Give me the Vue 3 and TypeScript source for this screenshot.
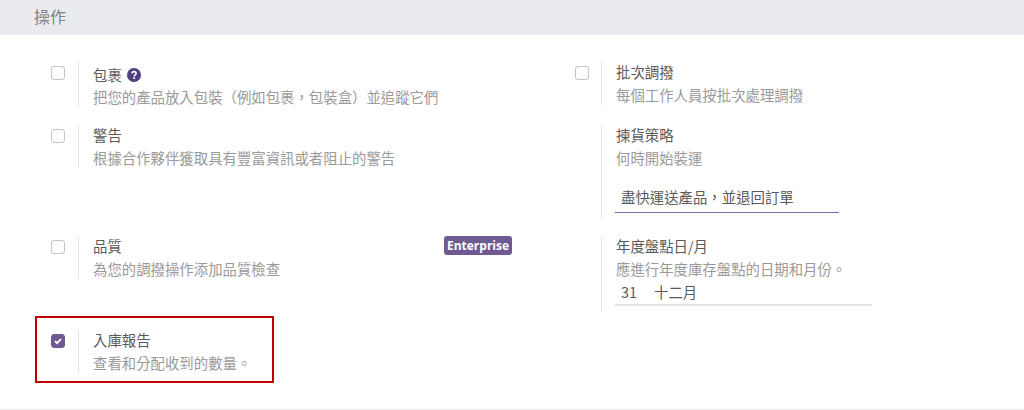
<script setup lang="ts">
interface Setting {
  title: string
  sub: string
  checkbox: boolean
  checked?: boolean
  help?: boolean
  badge?: boolean
  select?: string
  date?: [string, string]
  marked?: boolean
}

const settings: Setting[] = [
  { title: '包裹', sub: '把您的產品放入包裝\uFF08例如包裹\uFF0C包裝盒\uFF09並追蹤它們', checkbox: true, help: true },
  { title: '批次調撥', sub: '每個工作人員按批次處理調撥', checkbox: true },
  { title: '警告', sub: '根據合作夥伴獲取具有豐富資訊或者阻止的警告', checkbox: true },
  { title: '揀貨策略', sub: '何時開始裝運', checkbox: false, select: '盡快運送產品\uFF0C並退回訂單' },
  { title: '品質', sub: '為您的調撥操作添加品質檢查', checkbox: true, badge: true },
  { title: '年度盤點日/月', sub: '應進行年度庫存盤點的日期和月份\u3002', checkbox: false, date: ['31', '十二月'] },
  { title: '入庫報告', sub: '查看和分配收到的數量\u3002', checkbox: true, checked: true, marked: true },
]
</script>

<template>
  <div class="page" lang="zh-Hant-TW">
    <header class="band">操作</header>
    <section class="grid">
      <div v-for="s in settings" :key="s.title" class="cell">
        <div class="check-pane">
          <span v-if="s.checkbox" class="box" :class="{ on: s.checked }">
            <svg v-if="s.checked" width="10" height="10" viewBox="0 0 10 10">
              <path d="M2 5.2 4.1 7.2 8 3" fill="none" stroke="#fff" stroke-width="1.8" />
            </svg>
          </span>
        </div>
        <div class="text-pane" :class="{ 'has-help': s.help, 'has-select': s.select, 'has-date': s.date }">
          <div class="title">
            <span>{{ s.title }}</span>
            <svg v-if="s.help" class="help" width="14" height="14" viewBox="0 0 14 14">
              <circle cx="7" cy="7" r="7" fill="#4f3f7f" />
              <path d="M4.9 5.4C5 4.2 5.9 3.6 7 3.6c1.2 0 2.1.7 2.1 1.8 0 1.5-1.9 1.6-1.9 3" fill="none" stroke="#fff" stroke-width="1.6" />
              <rect x="6.3" y="9.3" width="1.8" height="1.7" fill="#fff" />
            </svg>
          </div>
          <div class="sub">{{ s.sub }}</div>
          <div v-if="s.select" class="select">{{ s.select }}</div>
          <div v-if="s.date" class="date">
            <span>{{ s.date[0] }}</span>
            <span>{{ s.date[1] }}</span>
          </div>
        </div>
        <span v-if="s.badge" class="badge">Enterprise</span>
        <span v-if="s.marked" class="mark"></span>
      </div>
    </section>
  </div>
</template>

<style>
html,
body {
  margin: 0;
  background: #fff;
}
</style>

<style scoped>
.page {
  height: 410px;
  box-sizing: border-box;
  border-bottom: 1px solid #e9e9e9;
  overflow: hidden;
  font-family: "Noto Sans CJK TC", "Liberation Sans", sans-serif;
  font-feature-settings: "locl" 1;
  font-size: 14.4px;
  line-height: 21.6px;
  background: #fff;
}
.band {
  height: 35px;
  padding-left: 34px;
  background: #e9ebef;
  color: #808386;
  font-size: 16px;
  line-height: 33px;
}
.grid {
  display: grid;
  grid-template-columns: 523px 423px;
  row-gap: 18px;
  align-items: start;
  padding: 27px 0 0 36px;
}
.cell {
  position: relative;
  display: flex;
  align-items: stretch;
}
.check-pane {
  width: 42px;
  flex: none;
  box-sizing: border-box;
  padding: 4px 0 0 15px;
}
.cell:nth-child(even) .check-pane {
  padding-left: 16px;
}
.box {
  display: flex;
  align-items: center;
  justify-content: center;
  width: 14px;
  height: 14px;
  box-sizing: border-box;
  border: 1px solid #c4c4c4;
  border-radius: 3px;
  background: #fff;
}
.box.on {
  border-color: #6f5a93;
  background: #6f5a93;
}
.text-pane {
  flex: 1;
  padding-left: 14px;
  border-left: 1px solid #e4e4e4;
}
.text-pane.has-select {
  padding-bottom: 5px;
}
.text-pane.has-date {
  padding-bottom: 6px;
}
.title {
  display: flex;
  align-items: center;
  gap: 5px;
  margin: -1px 0 1px;
  color: #5a5a5a;
}
.has-help .title {
  margin: 2px 0 0;
}
.help {
  flex: none;
}
.sub {
  color: #9a9a9a;
}
.select {
  box-sizing: border-box;
  width: 224px;
  margin: 18px 0 0 -1px;
  padding: 0 0 4px 6px;
  border-bottom: 1px solid #7c6ba6;
  color: #5a5a5a;
}
.date {
  display: flex;
  gap: 17px;
  box-sizing: border-box;
  width: 257px;
  height: 25px;
  margin: 2px 0 0 -1px;
  padding-left: 6px;
  border-bottom: 2px solid #e4e4e4;
  color: #5a5a5a;
}
.badge {
  position: absolute;
  top: 0;
  left: 408px;
  width: 68px;
  height: 19px;
  border-radius: 3px;
  background: #6f5a93;
  color: #fff;
  font-family: "Open Sans", "Liberation Sans", sans-serif;
  font-size: 12px;
  font-weight: 700;
  line-height: 19px;
  text-align: center;
}
.mark {
  position: absolute;
  top: -14px;
  left: -1px;
  width: 239px;
  height: 67px;
  box-sizing: border-box;
  border: 2px solid #c00000;
}
</style>
